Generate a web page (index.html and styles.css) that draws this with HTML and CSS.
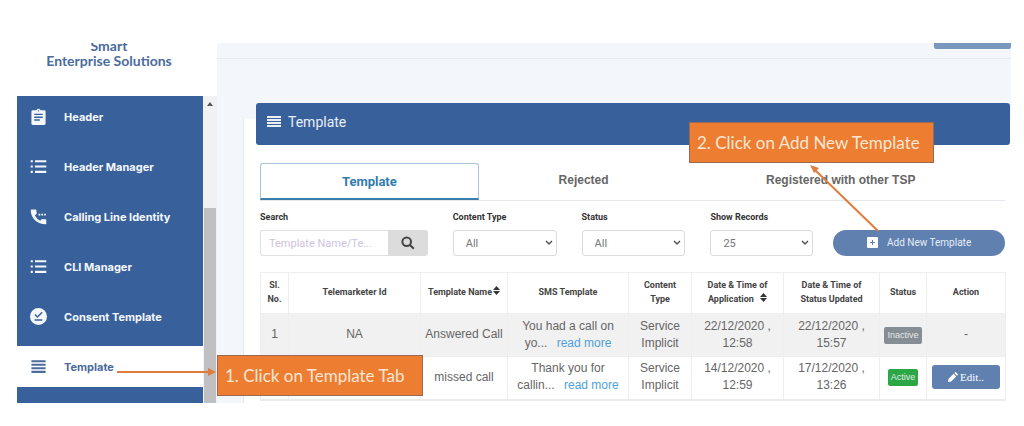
FILE: index.html
```html
<!DOCTYPE html>
<html lang="en">

<head>
    <title>Template - Smart Enterprise Solutions</title>
    <meta charset="UTF-8">
    <meta name="viewport" content="width=device-width, initial-scale=1.0">
    <link rel="stylesheet" href="styles.css">
</head>

<body>
    <div class="screen">

        <!-- Sidebar -->
        <aside class="sidebar">
            <div class="brand">Smart<br>Enterprise Solutions</div>
            <div class="menu-wrap">
                <nav class="menu">
                    <a href="#" class="menu-item">
                        <svg viewBox="0 0 24 24"><path d="M20 3h-5a3.200 3.200 0 0 0-6 0H4a2 2 0 0 0-2 2v17a2 2 0 0 0 2 2h16a2 2 0 0 0 2-2V5a2 2 0 0 0-2-2zm-8 0a1 1 0 1 1 0 2 1 1 0 0 1 0-2zm2 15H6v-2h8v2zm4-4H6v-2h12v2zm0-4H6V8h12v2z"/></svg>
                        Header
                    </a>
                    <a href="#" class="menu-item">
                        <svg viewBox="0 0 24 24"><path d="M1 3h3v3H1zM7 3h16v3H7zM1 10.500h3v3H1zM7 10.500h16v3H7zM1 18h3v3H1zM7 18h16v3H7z"/></svg>
                        Header Manager
                    </a>
                    <a href="#" class="menu-item">
                        <svg viewBox="0 0 24 24"><path d="M22 16c-1.300 0-2.700-.2-4-.6-.4-.1-.8 0-1.100.3l-2.400 2.400A17 17 0 0 1 6.900 10.500l2.400-2.400c.3-.3.4-.7.3-1.100C9.200 5.700 9 4.300 9 3c0-.6-.4-1-1-1H2c-.6 0-1 .4-1 1 0 11 9.500 20 21 20 .6 0 1-.4 1-1v-5c0-.6-.4-1-1-1zM12 8h2.500v2.500H12zM16 8h2.500v2.500H16zM20 8h2.500v2.500H20z"/></svg>
                        Calling Line Identity
                    </a>
                    <a href="#" class="menu-item">
                        <svg viewBox="0 0 24 24"><path d="M1 3h3v3H1zM7 3h16v3H7zM1 10.500h3v3H1zM7 10.500h16v3H7zM1 18h3v3H1zM7 18h16v3H7z"/></svg>
                        CLI Manager
                    </a>
                    <a href="#" class="menu-item">
                        <svg viewBox="0 0 24 24"><path fill-rule="evenodd" d="M12 0a12 12 0 1 0 0 24 12 12 0 0 0 0-24zM17.500 18h-11v-2h11zM10.500 14.200 6.300 10l1.500-1.500 2.700 2.700 5.900-5.900 1.500 1.500z"/></svg>
                        Consent Template
                    </a>
                    <a href="#" class="menu-item active">
                        <svg viewBox="0 0 24 24"><path d="M2 3h20v3H2zM2 8h20v3H2zM2 13h20v3H2zM2 18h20v3H2z"/></svg>
                        Template
                    </a>
                </nav>
                <div class="scroll-track">
                    <span class="scroll-up"></span>
                    <span class="scroll-thumb"></span>
                </div>
            </div>
        </aside>

        <!-- Main content -->
        <main class="content">
            <div class="topbar"><span class="topbar-btn"></span></div>

            <section class="card">
                <h1 class="card-title">
                    <svg viewBox="0 0 14 12"><path d="M0 0h14v2H0zM0 3h14v2H0zM0 6h14v2H0zM0 9h14v2H0z"/></svg>
                    Template
                </h1>

                <div class="card-body">
                    <div class="tabs">
                        <a href="#" class="tab active">Template</a>
                        <a href="#" class="tab">Rejected</a>
                        <a href="#" class="tab">Registered with other TSP</a>
                    </div>

                    <form class="filters">
                        <div class="field">
                            <label for="search">Search</label>
                            <div class="search-group">
                                <input type="text" id="search" placeholder="Template Name/Te...">
                                <button type="button" class="search-btn" aria-label="Search">
                                    <svg viewBox="0 0 14 14"><circle cx="5.700" cy="5.700" r="4.300"/><path d="M9 9l3.800 3.800"/></svg>
                                </button>
                            </div>
                        </div>
                        <div class="field">
                            <label for="content-type">Content Type</label>
                            <div class="select-box">
                                <select id="content-type"><option>All</option></select>
                                <svg viewBox="0 0 8 6"><path d="M1 1l3 3 3-3"/></svg>
                            </div>
                        </div>
                        <div class="field">
                            <label for="status">Status</label>
                            <div class="select-box">
                                <select id="status"><option>All</option></select>
                                <svg viewBox="0 0 8 6"><path d="M1 1l3 3 3-3"/></svg>
                            </div>
                        </div>
                        <div class="field">
                            <label for="records">Show Records</label>
                            <div class="select-box">
                                <select id="records"><option>25</option></select>
                                <svg viewBox="0 0 8 6"><path d="M1 1l3 3 3-3"/></svg>
                            </div>
                        </div>
                        <button type="button" class="add-btn">
                            <svg viewBox="0 0 11 11"><rect width="11" height="11" rx="1"/><path d="M3 5.500h5M5.500 3v5"/></svg>
                            Add New Template
                        </button>
                    </form>

                    <table class="records">
                        <colgroup>
                            <col class="c-no"><col class="c-tm"><col class="c-name"><col class="c-sms"><col class="c-type"><col class="c-applied"><col class="c-updated"><col class="c-status"><col class="c-action">
                        </colgroup>
                        <thead>
                            <tr>
                                <th>Sl.<br>No.</th>
                                <th>Telemarketer Id</th>
                                <th>Template Name<svg class="sort" viewBox="0 0 7 9"><path d="M3.500 0L7 4H0zM3.500 9L7 5H0z"/></svg></th>
                                <th>SMS Template</th>
                                <th>Content<br>Type</th>
                                <th>Date &amp; Time of<br>Application <svg class="sort spaced" viewBox="0 0 7 9"><path d="M3.500 0L7 4H0zM3.500 9L7 5H0z"/></svg></th>
                                <th>Date &amp; Time of<br>Status Updated</th>
                                <th>Status</th>
                                <th>Action</th>
                            </tr>
                        </thead>
                        <tbody>
                            <tr>
                                <td>1</td>
                                <td>NA</td>
                                <td>Answered Call</td>
                                <td>You had a call on<br>yo... <a href="#">read more</a></td>
                                <td>Service<br>Implicit</td>
                                <td>22/12/2020 ,<br>12:58</td>
                                <td>22/12/2020 ,<br>15:57</td>
                                <td><span class="badge inactive">Inactive</span></td>
                                <td>-</td>
                            </tr>
                            <tr>
                                <td></td>
                                <td></td>
                                <td>missed call</td>
                                <td>Thank you for<br>callin... <a href="#">read more</a></td>
                                <td>Service<br>Implicit</td>
                                <td>14/12/2020 ,<br>12:59</td>
                                <td>17/12/2020 ,<br>13:26</td>
                                <td><span class="badge live">Active</span></td>
                                <td>
                                    <button type="button" class="edit-btn">
                                        <svg viewBox="0 0 10 10"><path d="M0 10l.6-3.200L5.600 1.800 8.200 4.400 3.200 9.400zM6.300 1.100l.8-.8q.4-.4.800 0l1.800 1.800q.4.400 0 .8l-.8.8z"/></svg>
                                        Edit..
                                    </button>
                                </td>
                            </tr>
                        </tbody>
                    </table>
                </div>
            </section>
        </main>

        <!-- Tutorial callouts -->
        <div class="callout step-one">1. Click on Template Tab</div>
        <svg class="arrow arrow-one" viewBox="0 0 100 10"><path class="shaft" d="M0 5h92"/><path class="head" d="M91 1l8 4-8 4z"/></svg>
        <div class="callout step-two">2. Click on Add New Template</div>
        <svg class="arrow arrow-two" viewBox="0 0 70 68"><path class="shaft" d="M69 67L6 6"/><path class="head" d="M1 1l9 3-5 5z"/></svg>
    </div>
</body>

</html>
```

FILE: styles.css
```css
* {
    box-sizing: border-box;
}

body {
    margin: 0;
    padding: 43px 13px 23px 17px;
    background: #fff;
    font-family: "Liberation Sans", Arial, sans-serif;
    font-size: 12px;
    color: #666;
}

a {
    text-decoration: none;
}

.screen {
    position: relative;
    display: flex;
}

/* Sidebar */
.sidebar {
    display: flex;
    flex-direction: column;
    flex: 0 0 200px;
}

.brand {
    display: flex;
    align-items: flex-end;
    justify-content: center;
    height: 53px;
    padding: 0 16px 28px 0;
    overflow: hidden;
    font: bold 14px/15px Lato, sans-serif;
    text-align: center;
    color: #4a6b9c;
}

.menu-wrap {
    display: flex;
    flex: 1;
}

.menu {
    flex: 1;
    padding-bottom: 7px;
    background: #38619b;
}

.menu-item {
    display: flex;
    align-items: center;
    gap: 17px;
    height: 41px;
    margin-bottom: 9px;
    padding-left: 13px;
    font: bold 11px/14px Inter, sans-serif;
    color: #f4f7fb;
}

.menu-item svg {
    width: 17px;
    height: 17px;
    fill: currentColor;
}

.menu-item.active {
    background: #fff;
    color: #4a6b9c;
}

.scroll-track {
    display: flex;
    flex-direction: column;
    flex: 0 0 14px;
    background: #f0f1f3;
}

.scroll-up {
    margin: 6px auto 0;
    border: 3px solid transparent;
    border-top: 0;
    border-bottom: 4px solid #555;
}

.scroll-thumb {
    flex: 1;
    margin: 102px 1px 0;
    background: #c0c0c2;
}

/* Main content */
.content {
    flex: 1;
    min-width: 0;
    background: #f3f7fb;
}

.topbar {
    display: flex;
    justify-content: flex-end;
    height: 16px;
    border-bottom: 1px solid #e6ebf0;
}

.topbar-btn {
    width: 77px;
    height: 6px;
    border-radius: 0 0 2px 2px;
    background: #7a97be;
}

.card {
    margin: 60px 0 0 26px;
    padding: 0 1px 0 12px;
    border-left: 1px solid #e6eaee;
    background: #fff;
}

.card-title {
    display: flex;
    align-items: center;
    gap: 7px;
    position: relative;
    top: -16px;
    height: 42px;
    margin: 0 0 -16px;
    padding: 0 0 4px 11px;
    border-radius: 3px;
    background: #38619b;
    font: 14px/18px Roboto, sans-serif;
    color: #e9eff7;
}

.card-title svg {
    width: 14px;
    height: 12px;
    fill: currentColor;
}

.card-body {
    padding: 18px 5px 2px 4px;
}

/* Tabs */
.tabs {
    display: grid;
    grid-template-columns: 219fr 210fr 317fr;
    border-bottom: 1px solid #e4e8ec;
}

.tab {
    display: flex;
    align-items: center;
    justify-content: center;
    height: 37px;
    padding-bottom: 3px;
    font-size: 12px;
    font-weight: bold;
    color: #666;
}

.tab:last-child {
    padding-right: 12px;
}

.tab.active {
    padding: 0;
    border: 1px solid #a9c4da;
    border-bottom: 2px solid #3a7cab;
    border-radius: 3px 3px 0 0;
    font-family: Roboto, sans-serif;
    font-size: 13px;
    color: #2f7cae;
}

/* Filters */
.filters {
    display: grid;
    grid-template-columns: 173fr 109fr 109fr 103fr 172fr;
    align-items: end;
    gap: 20px;
    padding-top: 9px;
}

.field {
    min-width: 0;
    padding-right: 5px;
}

.field:nth-child(4) {
    padding-right: 0;
}

.field label {
    display: block;
    margin-bottom: 6px;
    font: bold 9px/14px Roboto, sans-serif;
    color: #333;
}

.search-group {
    display: flex;
    height: 26px;
}

.search-group input {
    flex: 1;
    min-width: 0;
    padding: 0 8px;
    border: 1px solid #e0e0e4;
    border-right: 0;
    border-radius: 3px 0 0 3px;
    background: #fff;
    font: 11px Roboto, sans-serif;
}

.search-group input::placeholder {
    color: #cfc3e0;
}

.search-btn {
    display: flex;
    align-items: center;
    justify-content: center;
    width: 40px;
    padding: 0;
    border: 0;
    border-radius: 0 3px 3px 0;
    background: #dcdcdc;
}

.search-btn svg {
    width: 14px;
    height: 14px;
    fill: none;
    stroke: #444;
    stroke-width: 2;
}

.select-box {
    position: relative;
}

.select-box select {
    appearance: none;
    display: block;
    width: 100%;
    height: 26px;
    padding: 0 12px;
    border: 1px solid #dcdcde;
    border-radius: 3px;
    background: #fff;
    font: 11px Roboto, sans-serif;
    color: #777;
}

.select-box svg {
    position: absolute;
    right: 4px;
    top: 10px;
    width: 8px;
    height: 6px;
    fill: none;
    stroke: #555;
    stroke-width: 1.500;
}

.add-btn {
    display: flex;
    align-items: center;
    justify-content: center;
    gap: 9px;
    height: 26px;
    padding-bottom: 3px;
    border: 0;
    border-radius: 13px;
    background: #6080b0;
    font: 10px Roboto, sans-serif;
    color: #e6edf6;
}

.add-btn svg {
    width: 11px;
    height: 11px;
    fill: #fff;
    stroke: #6080b0;
}

.add-btn rect {
    stroke: none;
}

/* Table */
.records {
    width: 100%;
    margin-top: 16px;
    table-layout: fixed;
    border-collapse: collapse;
    border-bottom: 2px solid #ececec;
    line-height: 17px;
    text-align: center;
}

.c-no { width: 28px; }
.c-tm { width: 132px; }
.c-name { width: 87px; }
.c-sms { width: 121px; }
.c-type { width: 63px; }
.c-applied { width: 92px; }
.c-updated { width: 96px; }
.c-status { width: 47px; }
.c-action { width: 79px; }

.records th,
.records td {
    height: 43px;
    padding: 0;
    border: 1px solid #eee;
    white-space: nowrap;
}

.records th {
    height: 41px;
    padding-bottom: 2px;
    font: bold 9px/14px Roboto, sans-serif;
    color: #444;
}

.records td {
    padding-bottom: 1px;
}

.records tbody tr:nth-child(odd) {
    background: #f1f1f1;
}

.records td a {
    margin-left: 6px;
    color: #4f9fdc;
}

.sort {
    width: 7px;
    height: 9px;
    margin-left: 1px;
    fill: #333;
}

.sort.spaced {
    margin-left: 4px;
}

.badge {
    display: inline-block;
    padding: 0 3px;
    border-radius: 2px;
    font-size: 9px;
    color: #e4e8ea;
}

.badge.inactive {
    background: #858d95;
}

.badge.live {
    background: #2ba745;
}

.edit-btn {
    display: inline-flex;
    align-items: center;
    justify-content: center;
    gap: 2px;
    width: 68px;
    height: 24px;
    border: 0;
    border-radius: 3px;
    background: #6080b0;
    font: 11px "Liberation Serif", serif;
    color: #fff;
    vertical-align: middle;
}

.edit-btn svg {
    width: 10px;
    height: 10px;
    fill: #fff;
}

/* Callouts */
.callout {
    position: absolute;
    height: 41px;
    padding: 0 7px;
    border: 1px solid #9b6a55;
    background: #ed7d31;
    font: 17px/39px Lato, sans-serif;
    color: #fbe6d5;
    white-space: nowrap;
}

.step-one {
    left: 200px;
    top: 312px;
    width: 206px;
}

.step-two {
    right: 77px;
    top: 79px;
    width: 245px;
}

.arrow {
    position: absolute;
}

.arrow-one {
    left: 100px;
    top: 324px;
    width: 100px;
    height: 10px;
}

.arrow-two {
    right: 132px;
    top: 121px;
    width: 70px;
    height: 68px;
}

.shaft {
    fill: none;
    stroke: #e07c3e;
    stroke-width: 2;
}

.head {
    fill: #e07c3e;
}
```
